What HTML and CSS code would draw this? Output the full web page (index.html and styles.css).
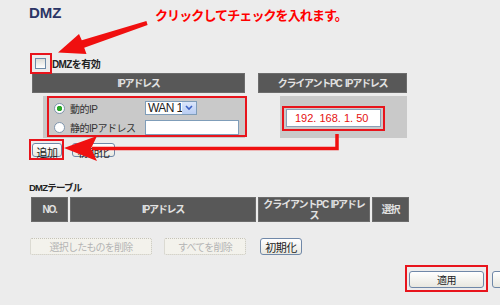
FILE: index.html
```html
<!DOCTYPE html>
<html lang="ja">
<head>
    <meta charset="UTF-8">
    <title>DMZ</title>
    <link rel="stylesheet" href="styles.css">
</head>
<body>

<div class="page">
    <h1 class="title">DMZ</h1>
    <div class="enable"><span class="check"></span><span class="enable-label">DMZを有効</span></div>

    <div class="setup-head">
        <div class="head col-ip">IPアドレス</div>
        <div class="head col-client">クライアントPC IPアドレス</div>
    </div>
    <div class="setup-row">
        <div class="cell-ip">
            <div class="opt">
                <span class="radio on"></span>
                <span class="opt-label">動的IP</span>
                <span class="select">WAN 1<span class="drop"><svg width="8" height="6" viewBox="0 0 8 6"><polyline points="1,1 4,4 7,1" fill="none" stroke="#3d62c4" stroke-width="1.6"/></svg></span></span>
            </div>
            <div class="opt">
                <span class="radio"></span>
                <span class="opt-label">静的IPアドレス</span>
                <span class="textbox"></span>
            </div>
        </div>
        <div class="cell-client">
            <span class="ipbox">192. 168. 1. 50</span>
        </div>
    </div>

    <div class="btn-row first">
        <button class="btn">追加</button>
        <button class="btn">初期化</button>
    </div>

    <h2 class="subtitle">DMZテーブル</h2>
    <div class="list-head">
        <div class="head c-no">NO.</div>
        <div class="head c-ip">IPアドレス</div>
        <div class="head c-client">クライアントPC IPアドレス</div>
        <div class="head c-sel">選択</div>
    </div>
    <div class="btn-row second">
        <button class="btn off del-sel">選択したものを削除</button>
        <button class="btn off del-all">すべてを削除</button>
        <button class="btn init">初期化</button>
    </div>
    <div class="apply-row">
        <button class="btn apply">適用</button>
        <button class="btn apply" aria-label="キャンセル"></button>
    </div>
</div>

<!-- 説明用の赤い注記 -->
<div class="note">クリックしてチェックを入れます。</div>
<svg class="marks" width="500" height="305" viewBox="0 0 500 305">
    <polygon fill="#f01010" points="146.4,21.1 81.8,40.2 79,34 58,52.5 86.5,54 84.2,47.8 147.6,24.9"/>
    <path d="M337 134 V148.5 H92" fill="none" stroke="#f01010" stroke-width="3.5"/>
    <polygon fill="#f01010" points="64,148 97,136 91,148.5 97,161"/>
</svg>
<div class="hl hl-check"></div>
<div class="hl hl-row"></div>
<div class="hl hl-ip"></div>
<div class="hl hl-add"></div>
<div class="hl hl-apply"></div>

</body>
</html>
```

FILE: styles.css
```css
body{
    margin: 0;
    background-color: #ececec;
    font-family: "Liberation Sans", "Noto Sans CJK JP", sans-serif;
    color: #222;
    overflow: hidden;
}

.page{
    width: 500px;
    height: 305px;
    padding-top: 4px;
    box-sizing: border-box;
}

.title{
    margin: 0 0 0 29px;
    font-size: 15px;
    line-height: 18px;
    font-weight: bold;
    color: #2b3566;
}

.enable{
    display: flex;
    align-items: center;
    height: 17px;
    margin: 33px 0 0 35px;
}
.check{
    width: 11px;
    height: 11px;
    box-sizing: border-box;
    border: 1px solid #6d8aa8;
    background: linear-gradient(#deded8, #fff);
    margin-right: 6px;
}
.enable-label{
    font-size: 10px;
    font-weight: bold;
    letter-spacing: -0.6px;
}

/* 見出しバー */
.head{
    background-color: #585858;
    color: #e2e2e2;
    font-size: 10px;
    font-weight: bold;
    letter-spacing: -1.2px;
    word-spacing: 2px;
    display: flex;
    align-items: center;
    justify-content: center;
    text-align: center;
    line-height: 11px;
    box-shadow: inset 0 0 0 1px #6c6c6c;
}

.setup-head{
    display: flex;
    gap: 13px;
    height: 20px;
    margin: 1px 0 0 32px;
}
.col-ip{ width: 213px; }
.col-client{ width: 149px; }

.setup-row{
    display: flex;
    gap: 35px;
    height: 42px;
    margin: 3px 0 0 43px;
}
.cell-ip{
    width: 202px;
    background-color: #c9c9c9;
    padding: 3px 0 0 11px;
    box-sizing: border-box;
    display: flex;
    flex-direction: column;
    gap: 1px;
}
.opt{
    display: flex;
    align-items: center;
    height: 18px;
}
.radio{
    width: 11px;
    height: 11px;
    box-sizing: border-box;
    border: 1px solid #7f95ad;
    border-radius: 50%;
    background-color: #fff;
    margin-right: 5px;
}
.radio.on{
    background: radial-gradient(circle, #2aa82a 0 2.5px, #fff 3px);
}
.opt-label{
    width: 75px;
    font-size: 10px;
    letter-spacing: -0.5px;
    color: #333;
}
.select{
    position: relative;
    width: 52px;
    height: 14px;
    box-sizing: border-box;
    border: 1px solid #7f9db9;
    background-color: #fff;
    font-size: 12px;
    letter-spacing: -0.6px;
    padding-left: 2px;
    display: flex;
    align-items: center;
}
.drop{
    position: absolute;
    right: 0;
    top: 0;
    width: 14px;
    height: 12px;
    background: linear-gradient(#dbe6fb, #b9cdf2);
    display: flex;
    align-items: center;
    justify-content: center;
}
.textbox{
    width: 94px;
    height: 15px;
    box-sizing: border-box;
    border: 1px solid #7f9db9;
    background-color: #fff;
}

.cell-client{
    width: 127px;
    background-color: #c9c9c9;
    padding: 13px 0 0 6px;
    box-sizing: border-box;
}
.ipbox{
    display: block;
    width: 95px;
    height: 18px;
    box-sizing: border-box;
    border: 1px solid #8aa0b8;
    background-color: #fff;
    color: #e51010;
    font-size: 11px;
    line-height: 16px;
    padding-left: 8px;
}

/* ボタン */
.btn{
    font-family: inherit;
    font-size: 11px;
    color: #222;
    padding: 0;
    height: 100%;
    box-sizing: border-box;
    border: 1px solid #7088a8;
    border-radius: 3px;
    background: linear-gradient(#fff, #e9e8e0);
    letter-spacing: -0.5px;
}
.btn.off{
    border: 1px dotted #c4c2b8;
    border-radius: 2px;
    background: #f3f2ec;
    color: #b4b4b4;
    font-size: 10px;
    letter-spacing: -0.8px;
}

.btn-row{
    display: flex;
}
.btn-row.first{
    gap: 10px;
    height: 14px;
    margin: 5px 0 0 32px;
}
.btn-row.first .btn:first-child{ width: 30px; }
.btn-row.first .btn:last-child{ width: 43px; }

.subtitle{
    margin: 24px 0 0 29px;
    font-size: 9.5px;
    line-height: 13px;
    font-weight: bold;
    letter-spacing: -0.8px;
}

.list-head{
    display: flex;
    gap: 2px;
    height: 25px;
    margin: 3px 0 0 31px;
}
.c-no{ width: 37px; }
.c-ip{ width: 186px; }
.c-client{
    width: 112px;
    padding: 0 4px;
    box-sizing: border-box;
    letter-spacing: -1.1px;
    word-spacing: 1px;
}
.c-sel{ width: 37px; }

.btn-row.second{
    gap: 12px;
    height: 17px;
    margin: 16px 0 0 30px;
}
.del-sel{ width: 122px; }
.del-all{ width: 82px; }
.init{ width: 42px; margin-left: 2px; }

.apply-row{
    display: flex;
    gap: 8px;
    height: 17px;
    margin: 16px 0 0 409px;
}
.apply{
    width: 75px;
    flex-shrink: 0;
    font-size: 10px;
}

/* 注記（赤） */
.note{
    position: absolute;
    left: 155px;
    top: 7px;
    color: #ff0000;
    font-family: "Noto Sans CJK JP", sans-serif;
    font-size: 13px;
    line-height: 16px;
    font-weight: bold;
    letter-spacing: -0.9px;
}
.marks{
    position: absolute;
    left: 0;
    top: 0;
    pointer-events: none;
}
.hl{
    position: absolute;
    border: 2px solid #e8141c;
    box-sizing: border-box;
}
.hl-check{ left: 30px; top: 53px; width: 22px; height: 21px; }
.hl-row{ left: 47px; top: 96px; width: 200px; height: 41px; }
.hl-ip{ left: 282px; top: 106px; width: 103px; height: 25px; }
.hl-add{ left: 29px; top: 139px; width: 35px; height: 21px; }
.hl-apply{ left: 405px; top: 265px; width: 83px; height: 27px; }
```
